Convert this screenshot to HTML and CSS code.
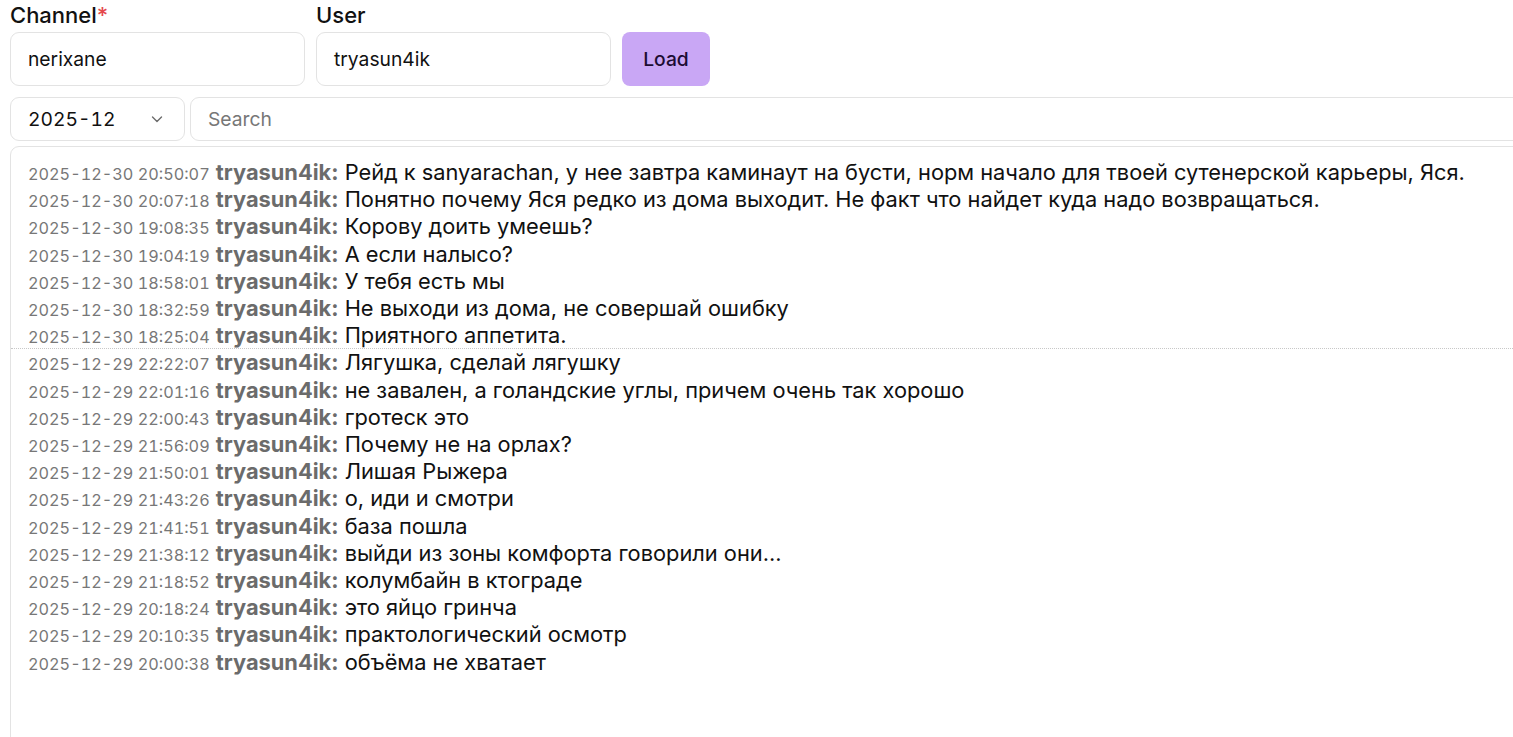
FILE: index.html
```html
<!DOCTYPE html>
<html>
<head>
<meta charset="utf-8">
<link rel="stylesheet" href="styles.css">
</head>
<body>
<div class="page">
  <form class="filters">
    <div class="field">
      <label class="label">Channel<span class="req">*</span></label>
      <div class="input">nerixane</div>
    </div>
    <div class="field">
      <label class="label">User</label>
      <div class="input">tryasun4ik</div>
    </div>
    <button type="button" class="load">Load</button>
  </form>
  <div class="toolbar">
    <div class="select">
      <span class="select-value">2025-12</span>
      <svg class="chev" width="16" height="16" viewBox="0 0 16 16"><path d="M3.5 6l4.5 4.5 4.5-4.5" fill="none" stroke="#6b6b6b" stroke-width="1.4" stroke-linecap="round" stroke-linejoin="round"/></svg>
    </div>
    <div class="search">Search</div>
  </div>
  <div class="log">
    <div class="line"><span class="ts">2025-12-30 20:50:07</span> <span class="user">tryasun4ik:</span> Рейд к sanyarachan, у нее завтра каминаут на бусти, норм начало для твоей сутенерской карьеры, Яся.</div>
    <div class="line"><span class="ts">2025-12-30 20:07:18</span> <span class="user">tryasun4ik:</span> Понятно почему Яся редко из дома выходит. Не факт что найдет куда надо возвращаться.</div>
    <div class="line"><span class="ts">2025-12-30 19:08:35</span> <span class="user">tryasun4ik:</span> Корову доить умеешь?</div>
    <div class="line"><span class="ts">2025-12-30 19:04:19</span> <span class="user">tryasun4ik:</span> А если налысо?</div>
    <div class="line"><span class="ts">2025-12-30 18:58:01</span> <span class="user">tryasun4ik:</span> У тебя есть мы</div>
    <div class="line"><span class="ts">2025-12-30 18:32:59</span> <span class="user">tryasun4ik:</span> Не выходи из дома, не совершай ошибку</div>
    <div class="line"><span class="ts">2025-12-30 18:25:04</span> <span class="user">tryasun4ik:</span> Приятного аппетита.</div>
    <div class="line day"><span class="ts">2025-12-29 22:22:07</span> <span class="user">tryasun4ik:</span> Лягушка, сделай лягушку</div>
    <div class="line"><span class="ts">2025-12-29 22:01:16</span> <span class="user">tryasun4ik:</span> не завален, а голандские углы, причем очень так хорошо</div>
    <div class="line"><span class="ts">2025-12-29 22:00:43</span> <span class="user">tryasun4ik:</span> гротеск это</div>
    <div class="line"><span class="ts">2025-12-29 21:56:09</span> <span class="user">tryasun4ik:</span> Почему не на орлах?</div>
    <div class="line"><span class="ts">2025-12-29 21:50:01</span> <span class="user">tryasun4ik:</span> Лишая Рыжера</div>
    <div class="line"><span class="ts">2025-12-29 21:43:26</span> <span class="user">tryasun4ik:</span> о, иди и смотри</div>
    <div class="line"><span class="ts">2025-12-29 21:41:51</span> <span class="user">tryasun4ik:</span> база пошла</div>
    <div class="line"><span class="ts">2025-12-29 21:38:12</span> <span class="user">tryasun4ik:</span> выйди из зоны комфорта говорили они...</div>
    <div class="line"><span class="ts">2025-12-29 21:18:52</span> <span class="user">tryasun4ik:</span> колумбайн в ктограде</div>
    <div class="line"><span class="ts">2025-12-29 20:18:24</span> <span class="user">tryasun4ik:</span> это яйцо гринча</div>
    <div class="line"><span class="ts">2025-12-29 20:10:35</span> <span class="user">tryasun4ik:</span> практологический осмотр</div>
    <div class="line"><span class="ts">2025-12-29 20:00:38</span> <span class="user">tryasun4ik:</span> объёма не хватает</div>
  </div>
</div>
</body>
</html>
```
FILE: styles.css
```css
html, body {
  margin: 0;
  padding: 0;
  overflow: hidden;
  background: #fff;
}
body {
  font-family: Inter, "Noto Sans", sans-serif;
  color: #111;
}
.page {
  padding: 0 0 0 10px;
  width: 1560px;
}
.filters {
  display: flex;
  align-items: flex-end;
  gap: 11px;
  margin: 0;
}
.field {
  display: flex;
  flex-direction: column;
  width: 295px;
}
.label {
  font-size: 22px;
  font-weight: 500;
  line-height: 30px;
  height: 30px;
  margin-bottom: 2px;
  color: #111;
}
.req {
  color: #e5484d;
}
.input {
  box-sizing: border-box;
  height: 54px;
  border: 1px solid #e3e3e3;
  border-radius: 9px;
  padding: 0 17px;
  display: flex;
  align-items: center;
  font-size: 19.25px;
  color: #111;
}
.load {
  box-sizing: border-box;
  width: 88px;
  height: 54px;
  border: none;
  border-radius: 8px;
  background: #c9a7f5;
  color: #1c0c33;
  font-family: Inter, sans-serif;
  font-size: 19.25px;
  font-weight: 500;
  padding: 0;
}
.toolbar {
  display: flex;
  gap: 5px;
  margin-top: 11px;
}
.select {
  box-sizing: border-box;
  width: 175px;
  height: 44px;
  border: 1px solid #e3e3e3;
  border-radius: 9px;
  padding: 0 19px 0 17px;
  display: flex;
  align-items: center;
  justify-content: space-between;
  font-size: 19.25px;
  font-variant-numeric: tabular-nums;
}
.search {
  box-sizing: border-box;
  flex: 1;
  height: 44px;
  border: 1px solid #e3e3e3;
  border-radius: 9px;
  padding: 0 17px;
  display: flex;
  align-items: center;
  font-size: 19.25px;
  color: #777;
}
.log {
  box-sizing: border-box;
  margin-top: 5px;
  height: 620px;
  border: 1px solid #e3e3e3;
  border-radius: 9px;
  padding: 12px 0 0 0;
}
.line {
  font-size: 21.8px;
  line-height: 27.2px;
  padding-left: 17px;
  white-space: nowrap;
  color: #111;
}
.line.day {
  border-top: 1px dotted #c8c8c8;
  margin-top: -1px;
}
.ts {
  font-size: 16.25px;
  line-height: 1;
  color: #777;
  font-variant-numeric: tabular-nums;
}
.user {
  font-weight: 700;
  color: #6b6b6b;
}
```
